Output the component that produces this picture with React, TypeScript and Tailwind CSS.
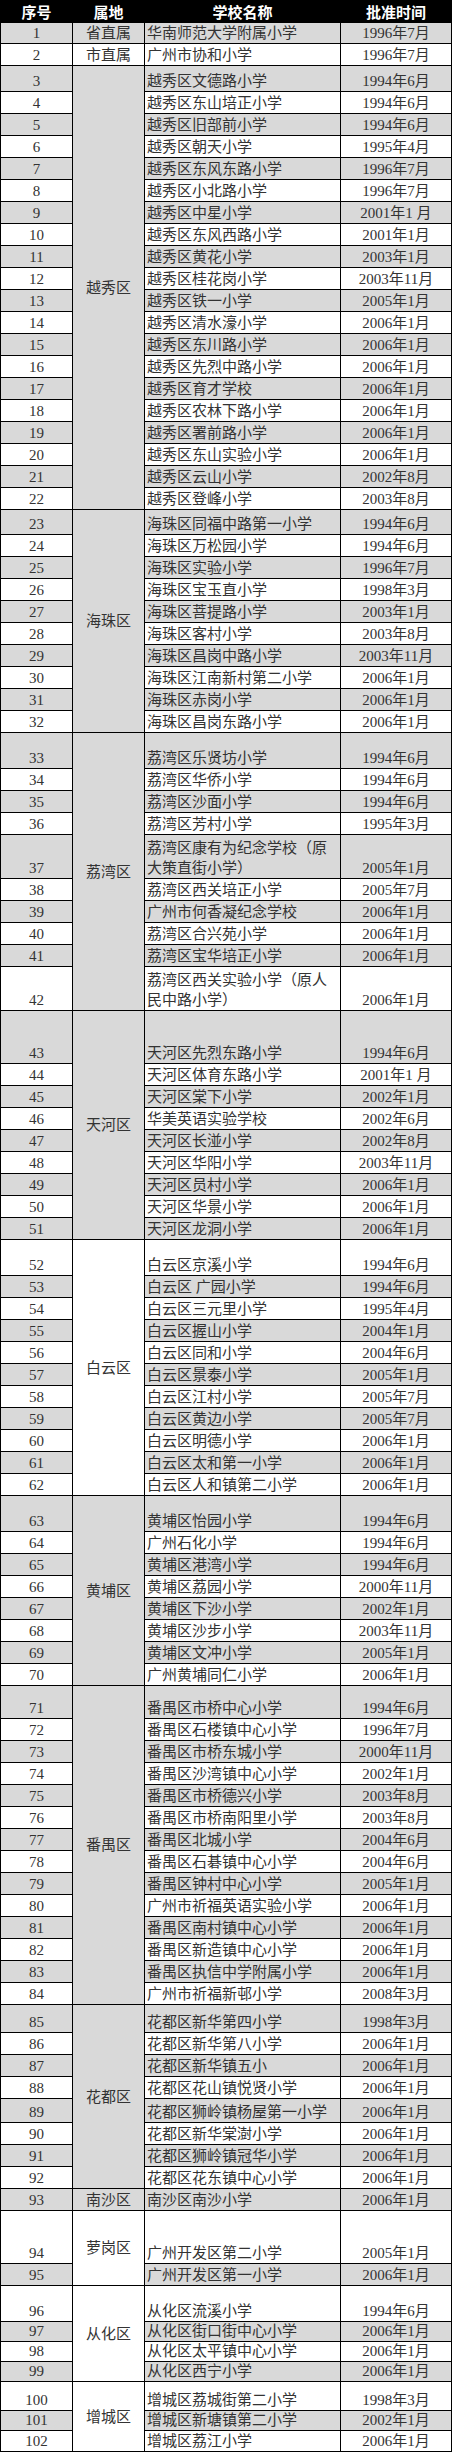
import React from "react";

type Row = [number, string, string];

const rows: Row[] = [
  [1, "华南师范大学附属小学", "1996年7月"],
  [2, "广州市协和小学", "1996年7月"],
  [3, "越秀区文德路小学", "1994年6月"],
  [4, "越秀区东山培正小学", "1994年6月"],
  [5, "越秀区旧部前小学", "1994年6月"],
  [6, "越秀区朝天小学", "1995年4月"],
  [7, "越秀区东风东路小学", "1996年7月"],
  [8, "越秀区小北路小学", "1996年7月"],
  [9, "越秀区中星小学", "2001年1 月"],
  [10, "越秀区东风西路小学", "2001年1月"],
  [11, "越秀区黄花小学", "2003年1月"],
  [12, "越秀区桂花岗小学", "2003年11月"],
  [13, "越秀区铁一小学", "2005年1月"],
  [14, "越秀区清水濠小学", "2006年1月"],
  [15, "越秀区东川路小学", "2006年1月"],
  [16, "越秀区先烈中路小学", "2006年1月"],
  [17, "越秀区育才学校", "2006年1月"],
  [18, "越秀区农林下路小学", "2006年1月"],
  [19, "越秀区署前路小学", "2006年1月"],
  [20, "越秀区东山实验小学", "2006年1月"],
  [21, "越秀区云山小学", "2002年8月"],
  [22, "越秀区登峰小学", "2003年8月"],
  [23, "海珠区同福中路第一小学", "1994年6月"],
  [24, "海珠区万松园小学", "1994年6月"],
  [25, "海珠区实验小学", "1996年7月"],
  [26, "海珠区宝玉直小学", "1998年3月"],
  [27, "海珠区菩提路小学", "2003年1月"],
  [28, "海珠区客村小学", "2003年8月"],
  [29, "海珠区昌岗中路小学", "2003年11月"],
  [30, "海珠区江南新村第二小学", "2006年1月"],
  [31, "海珠区赤岗小学", "2006年1月"],
  [32, "海珠区昌岗东路小学", "2006年1月"],
  [33, "荔湾区乐贤坊小学", "1994年6月"],
  [34, "荔湾区华侨小学", "1994年6月"],
  [35, "荔湾区沙面小学", "1994年6月"],
  [36, "荔湾区芳村小学", "1995年3月"],
  [37, "荔湾区康有为纪念学校（原|大策直街小学）", "2005年1月"],
  [38, "荔湾区西关培正小学", "2005年7月"],
  [39, "广州市何香凝纪念学校", "2006年1月"],
  [40, "荔湾区合兴苑小学", "2006年1月"],
  [41, "荔湾区宝华培正小学", "2006年1月"],
  [42, "荔湾区西关实验小学（原人|民中路小学）", "2006年1月"],
  [43, "天河区先烈东路小学", "1994年6月"],
  [44, "天河区体育东路小学", "2001年1 月"],
  [45, "天河区棠下小学", "2002年1月"],
  [46, "华美英语实验学校", "2002年6月"],
  [47, "天河区长湴小学", "2002年8月"],
  [48, "天河区华阳小学", "2003年11月"],
  [49, "天河区员村小学", "2006年1月"],
  [50, "天河区华景小学", "2006年1月"],
  [51, "天河区龙洞小学", "2006年1月"],
  [52, "白云区京溪小学", "1994年6月"],
  [53, "白云区 广园小学", "1994年6月"],
  [54, "白云区三元里小学", "1995年4月"],
  [55, "白云区握山小学", "2004年1月"],
  [56, "白云区同和小学", "2004年6月"],
  [57, "白云区景泰小学", "2005年1月"],
  [58, "白云区江村小学", "2005年7月"],
  [59, "白云区黄边小学", "2005年7月"],
  [60, "白云区明德小学", "2006年1月"],
  [61, "白云区太和第一小学", "2006年1月"],
  [62, "白云区人和镇第二小学", "2006年1月"],
  [63, "黄埔区怡园小学", "1994年6月"],
  [64, "广州石化小学", "1994年6月"],
  [65, "黄埔区港湾小学", "1994年6月"],
  [66, "黄埔区荔园小学", "2000年11月"],
  [67, "黄埔区下沙小学", "2002年1月"],
  [68, "黄埔区沙步小学", "2003年11月"],
  [69, "黄埔区文冲小学", "2005年1月"],
  [70, "广州黄埔同仁小学", "2006年1月"],
  [71, "番禺区市桥中心小学", "1994年6月"],
  [72, "番禺区石楼镇中心小学", "1996年7月"],
  [73, "番禺区市桥东城小学", "2000年11月"],
  [74, "番禺区沙湾镇中心小学", "2002年1月"],
  [75, "番禺区市桥德兴小学", "2003年8月"],
  [76, "番禺区市桥南阳里小学", "2003年8月"],
  [77, "番禺区北城小学", "2004年6月"],
  [78, "番禺区石碁镇中心小学", "2004年6月"],
  [79, "番禺区钟村中心小学", "2005年1月"],
  [80, "广州市祈福英语实验小学", "2006年1月"],
  [81, "番禺区南村镇中心小学", "2006年1月"],
  [82, "番禺区新造镇中心小学", "2006年1月"],
  [83, "番禺区执信中学附属小学", "2006年1月"],
  [84, "广州市祈福新邨小学", "2008年3月"],
  [85, "花都区新华第四小学", "1998年3月"],
  [86, "花都区新华第八小学", "2006年1月"],
  [87, "花都区新华镇五小", "2006年1月"],
  [88, "花都区花山镇悦贤小学", "2006年1月"],
  [89, "花都区狮岭镇杨屋第一小学", "2006年1月"],
  [90, "花都区新华棠澍小学", "2006年1月"],
  [91, "花都区狮岭镇冠华小学", "2006年1月"],
  [92, "花都区花东镇中心小学", "2006年1月"],
  [93, "南沙区南沙小学", "2006年1月"],
  [94, "广州开发区第二小学", "2005年1月"],
  [95, "广州开发区第一小学", "2006年1月"],
  [96, "从化区流溪小学", "1994年6月"],
  [97, "从化区街口街中心小学", "2006年1月"],
  [98, "从化区太平镇中心小学", "2006年1月"],
  [99, "从化区西宁小学", "2006年1月"],
  [100, "增城区荔城街第二小学", "1998年3月"],
  [101, "增城区新塘镇第二小学", "2002年1月"],
  [102, "增城区荔江小学", "2006年1月"],
];

const groups: Record<number, { name: string; span: string }> = {
  1: { name: "省直属", span: "row-span-1" },
  2: { name: "市直属", span: "row-span-1" },
  3: { name: "越秀区", span: "row-span-20" },
  23: { name: "海珠区", span: "row-span-10" },
  33: { name: "荔湾区", span: "row-span-10" },
  43: { name: "天河区", span: "row-span-9" },
  52: { name: "白云区", span: "row-span-11" },
  63: { name: "黄埔区", span: "row-span-8" },
  71: { name: "番禺区", span: "row-span-14" },
  85: { name: "花都区", span: "row-span-8" },
  93: { name: "南沙区", span: "row-span-1" },
  94: { name: "萝岗区", span: "row-span-2" },
  96: { name: "从化区", span: "row-span-4" },
  100: { name: "增城区", span: "row-span-3" },
};

const heights: Record<number, string> = {
  1: "h-[20px]",
  3: "h-[25px]",
  23: "h-[24px]",
  33: "h-[35px]",
  37: "h-[43px]",
  42: "h-[43px]",
  43: "h-[52px]",
  52: "h-[35px]",
  63: "h-[35px]",
  71: "h-[32px]",
  85: "h-[27px]",
  89: "h-[23px]",
  94: "h-[52px]",
  96: "h-[35px]",
  97: "h-[19px]",
  98: "h-[19px]",
  99: "h-[19px]",
  100: "h-[28px]",
  101: "h-[19px]",
  102: "h-[20px]",
};

export default function App() {
  return (
    <div className="w-[456px] min-h-[2454px] bg-white">
      <div className="grid w-[452px] grid-cols-[71px_71px_195px_110px] gap-px bg-black p-px text-[15px] leading-[20px] text-[#333] font-['Liberation_Serif','Noto_Sans_CJK_SC',serif]">
        {["序号", "属地", "学校名称", "批准时间"].map((h) => (
          <div
            key={h}
            className="flex h-[21px] items-center justify-center bg-black font-bold text-white font-['Noto_Sans_CJK_SC',sans-serif]"
          >
            {h}
          </div>
        ))}
        {rows.map(([n, school, date]) => {
          const bg = n % 2 === 1 ? "bg-[#d9d9d9]" : "bg-white";
          const h = heights[n] ?? "h-[21px]";
          const g = groups[n];
          const lines = school.split("|");
          return (
            <React.Fragment key={n}>
              <div className={`flex items-end justify-center ${h} ${bg}`}>{n}</div>
              {g && (
                <div className={`flex items-center justify-center ${g.span} ${bg}`}>
                  {g.name}
                </div>
              )}
              <div className={`flex flex-col justify-end pl-[2px] whitespace-pre ${h} ${bg}`}>
                {lines.map((l, i) => (
                  <span key={i}>{l}</span>
                ))}
              </div>
              <div className={`flex items-end justify-center whitespace-pre ${h} ${bg}`}>{date}</div>
            </React.Fragment>
          );
        })}
      </div>
    </div>
  );
}
